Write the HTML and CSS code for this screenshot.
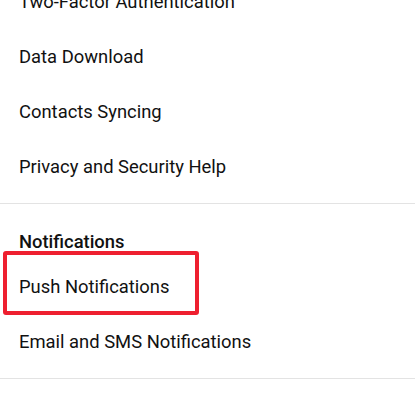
FILE: index.html
```html
<!DOCTYPE html>
<html lang="en">
    <head>
        <meta charset="utf-8">
        <title>Settings - Privacy and Security</title>
        <link rel="stylesheet" href="styles.css">
    </head>

    <body>
        <div class="screen">
            <div class="group first">
                <div class="item">Two-Factor Authentication</div>
                <div class="item">Data Download</div>
                <div class="item">Contacts Syncing</div>
                <div class="item">Privacy and Security Help</div>
            </div>

            <div class="group">
                <div class="group-title">Notifications</div>
                <div class="item highlighted">Push Notifications</div>
                <div class="item">Email and SMS Notifications</div>
            </div>
        </div>
    </body>
</html>
```

FILE: styles.css
```css
body {
    margin: 0;
    background-color: #fff;
    font-family: Roboto, "Noto Sans", Arial, sans-serif;
    color: #111;
    overflow: hidden;
}

.screen {
    width: 415px;
}

.group {
    padding-bottom: 9px;
    border-bottom: 1px solid #e3e3e3;
}

.group.first {
    margin-top: -26px;
    padding-bottom: 9px;
}

.group-title {
    padding: 20px 19px 0;
    height: 35px;
    line-height: 35px;
    font-size: 18.4px;
    font-weight: 500;
}

.item {
    padding: 0 19px;
    height: 55px;
    line-height: 55px;
    font-size: 18.4px;
}

/* red marker drawn over the row */
.highlighted {
    position: relative;
}

.highlighted::after {
    content: "";
    position: absolute;
    left: 3px;
    top: -8px;
    width: 188px;
    height: 56px;
    border: 4.5px solid #ee1f2f;
    border-radius: 3px;
}
```
